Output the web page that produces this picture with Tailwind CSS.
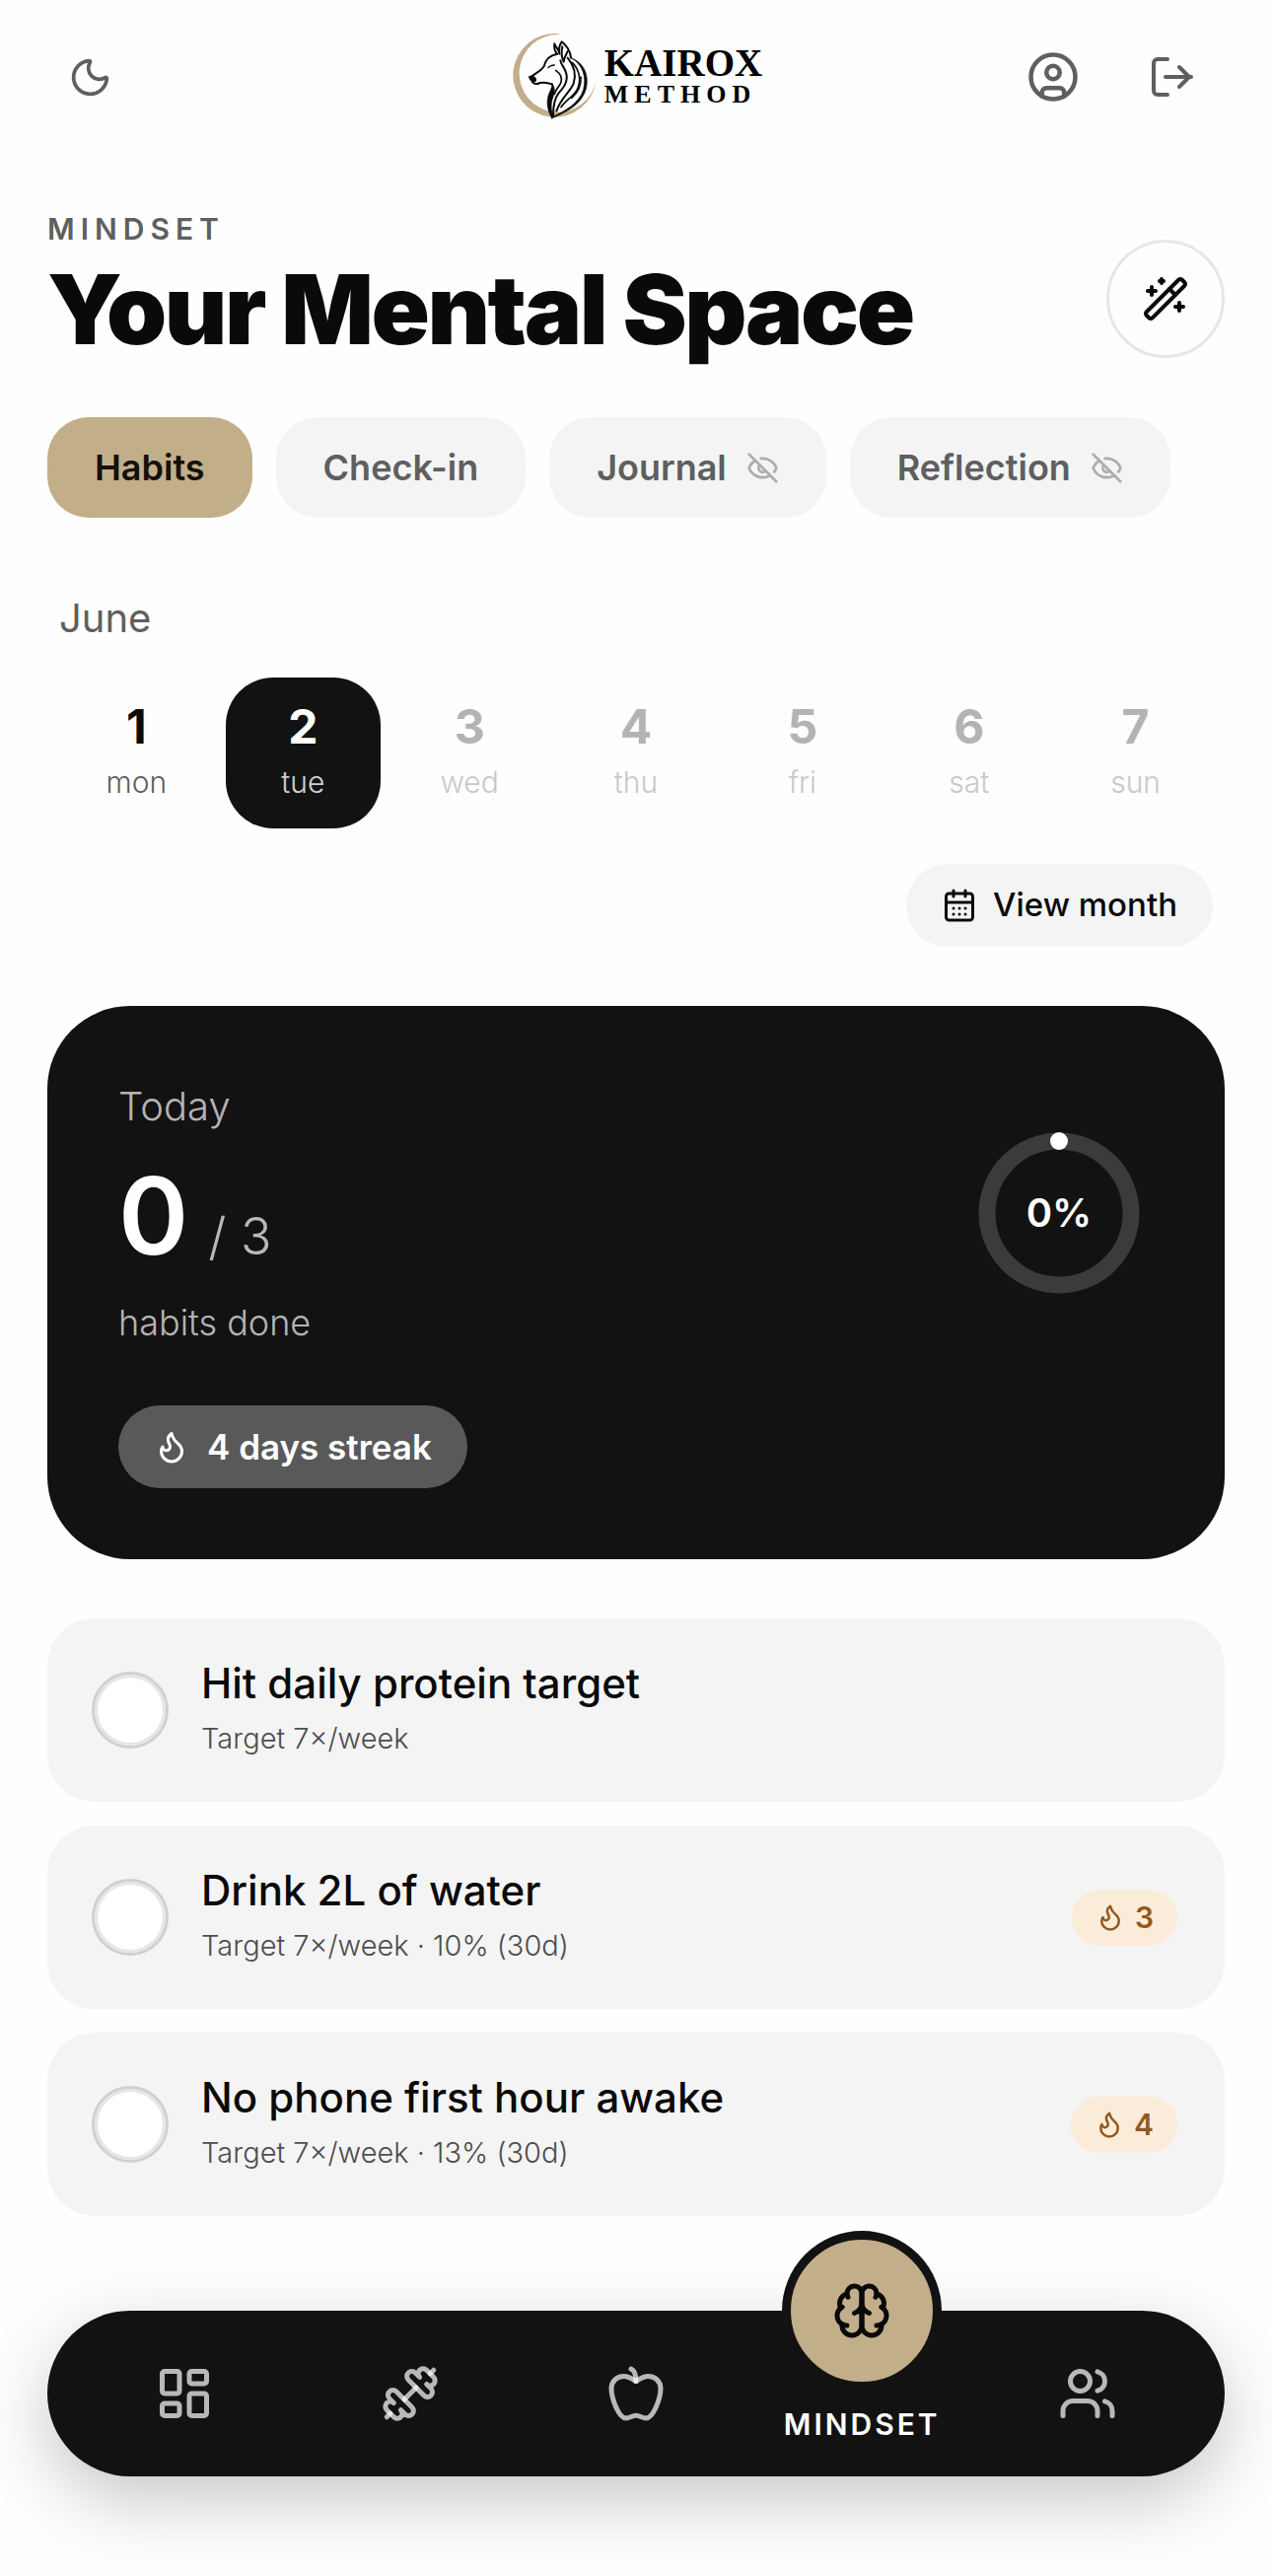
<!DOCTYPE html>
<html lang="en">
<head>
    <meta charset="UTF-8">
    <meta name="viewport" content="width=device-width, initial-scale=1.0">
    <title>Mindset - Kairox Method</title>
    <script src="https://cdn.jsdelivr.net/npm/@tailwindcss/browser@4"></script>
</head>
<body class="bg-[#fefefe] min-h-screen font-['Inter',sans-serif] text-[#0a0a0a]">
    <!-- Shared icons -->
    <svg class="hidden" aria-hidden="true">
        <symbol id="icon-flame" viewBox="0 0 24 24">
            <path d="M12 3q1 4 4 6.500t3 5.500a1 1 0 0 1-14 0 5 5 0 0 1 1-3 1 1 0 0 0 5 0c0-2-1.500-3-1.500-5q0-2 2.500-4"/>
        </symbol>
        <symbol id="icon-eye-off" viewBox="0 0 24 24">
            <path d="M10.733 5.076a10.744 10.744 0 0 1 11.205 6.575 1 1 0 0 1 0 .696 10.747 10.747 0 0 1-1.444 2.490"/>
            <path d="M14.084 14.158a3 3 0 0 1-4.242-4.242"/>
            <path d="M17.479 17.499a10.750 10.750 0 0 1-15.417-5.151 1 1 0 0 1 0-.696 10.750 10.750 0 0 1 4.446-5.143"/>
            <path d="m2 2 20 20"/>
        </symbol>
    </svg>

    <header class="grid grid-cols-[1fr_auto_1fr] items-center h-[156px] px-12 text-[#5f5f5f]">
        <button type="button" aria-label="Dark mode" class="flex items-center justify-center w-[87px] h-[108px]">
            <svg class="size-[45px]" viewBox="0 0 24 24" fill="none" stroke="currentColor" stroke-width="2" stroke-linecap="round" stroke-linejoin="round">
                <path d="M20.985 12.486a9 9 0 1 1-9.473-9.472c.405-.022.617.46.402.803a6 6 0 0 0 8.268 8.268c.344-.215.825-.004.803.401"/>
            </svg>
        </button>
        <a href="#" class="flex items-center gap-1.5 text-black">
            <svg class="size-[90px]" viewBox="50 35 270 270" fill="none" stroke="#0a0a0a" stroke-width="6" stroke-linecap="round" stroke-linejoin="round">
                <path d="M200 39A127 127 0 1 0 313 180A118 118 0 1 1 200 41Z" fill="#c3ae8a" stroke="none"/>
                <path d="M178 296C165 272 162 250 166 232C169 215 180 208 178 188C190 206 186 220 180 236C174 254 176 274 182 290C214 276 262 250 274 208C284 170 272 132 236 112C276 126 292 166 282 206C268 256 222 276 178 296Z" fill="#0a0a0a" stroke-width="2"/>
                <path d="M194 100C172 104 158 118 154 138C146 152 124 162 112 171"/>
                <path d="M110 170C122 168 130 174 128 181C122 186 114 184 110 170Z" fill="#0a0a0a"/>
                <path d="M118 184C122 194 134 192 142 188C154 186 168 188 178 192"/>
                <path d="M194 100C186 90 184 80 186 69C190 80 198 86 200 94"/>
                <path d="M201 100C198 84 202 72 208 63C222 74 234 90 236 112"/>
                <path d="M210 78C206 96 208 112 214 124C216 106 224 100 226 92"/>
                <path d="M167 142C172 136 179 134 186 134" stroke-width="4"/>
                <path d="M204 120C206 134 218 142 222 160C228 186 212 204 198 220C186 236 182 262 182 288"/>
                <path d="M226 112C244 134 254 160 244 190C234 216 206 232 192 274"/>
                <path d="M240 126C264 150 268 184 254 210C242 230 220 242 206 262" stroke-width="5"/>
                <path d="M190 150C204 160 210 172 206 186C202 200 190 204 186 222" stroke-width="5"/>
                <path d="M266 170C268 194 256 218 238 234" stroke-width="5"/>
            </svg>
            <span class="flex flex-col font-['Liberation_Serif',serif] font-bold">
                <span class="text-[39px] leading-9">KAIROX</span>
                <span class="text-[26px] leading-7 tracking-[6px]">METHOD</span>
            </span>
        </a>
        <div class="flex items-center justify-end gap-3">
            <button type="button" aria-label="Profile" class="flex items-center justify-center size-[108px]">
                <svg class="size-[54px]" viewBox="0 0 24 24" fill="none" stroke="currentColor" stroke-width="2" stroke-linecap="round" stroke-linejoin="round">
                    <circle cx="12" cy="12" r="10"/>
                    <circle cx="12" cy="10" r="3"/>
                    <path d="M7 20.662V19a2 2 0 0 1 2-2h6a2 2 0 0 1 2 2v1.662"/>
                </svg>
            </button>
            <button type="button" aria-label="Log out" class="flex items-center justify-center size-[108px]">
                <svg class="size-12" viewBox="0 0 24 24" fill="none" stroke="currentColor" stroke-width="2" stroke-linecap="round" stroke-linejoin="round">
                    <path d="M10 3H5a2 2 0 0 0-2 2v14a2 2 0 0 0 2 2h5"/>
                    <path d="M9 12h13"/>
                    <path d="m16 7 5 5-5 5"/>
                </svg>
            </button>
        </div>
    </header>

    <main class="px-12 pt-[58px]">
        <div class="flex items-end justify-between">
            <div>
                <p class="text-[30px] leading-9 font-semibold tracking-[6px] text-[#5f5f5f]">MINDSET</p>
                <h1 class="mt-[15px] text-[98px] leading-[98px] font-black tracking-tight">Your Mental Space</h1>
            </div>
            <button type="button" aria-label="Suggestions" class="flex shrink-0 items-center justify-center size-[120px] rounded-full border-3 border-[#e7e7e7]">
                <svg class="size-12" viewBox="0 0 24 24" fill="none" stroke="currentColor" stroke-width="2" stroke-linecap="round" stroke-linejoin="round">
                    <path d="m21.640 3.640-1.280-1.280a1.210 1.210 0 0 0-1.720 0L2.360 18.640a1.210 1.210 0 0 0 0 1.720l1.280 1.280a1.200 1.200 0 0 0 1.720 0L21.640 5.360a1.200 1.200 0 0 0 0-1.720"/>
                    <path d="m14 7 3 3"/>
                    <path d="M5 6v4"/>
                    <path d="M19 14v4"/>
                    <path d="M10 2v2"/>
                    <path d="M7 8H3"/>
                    <path d="M21 16h-4"/>
                    <path d="M11 3H9"/>
                </svg>
            </button>
        </div>

        <div class="mt-[60px] flex gap-6 text-4xl font-semibold text-[#5f5f5f]">
            <button type="button" class="h-[102px] px-12 rounded-[42px] bg-[#c3ae8a] text-[#14110a]">Habits</button>
            <button type="button" class="h-[102px] px-12 rounded-[42px] bg-[#f4f4f4]">Check-in</button>
            <button type="button" class="flex items-center gap-5 h-[102px] px-12 rounded-[42px] bg-[#f4f4f4]">
                Journal
                <svg class="size-[33px] text-[#adadad]" fill="none" stroke="currentColor" stroke-width="2" stroke-linecap="round" stroke-linejoin="round"><use href="#icon-eye-off"/></svg>
            </button>
            <button type="button" class="flex items-center gap-5 h-[102px] px-12 rounded-[42px] bg-[#f4f4f4]">
                Reflection
                <svg class="size-[33px] text-[#adadad]" fill="none" stroke="currentColor" stroke-width="2" stroke-linecap="round" stroke-linejoin="round"><use href="#icon-eye-off"/></svg>
            </button>
        </div>

        <section class="mt-[72px] px-3">
            <h2 class="text-[40px] leading-[60px] text-[#5f5f5f]">June</h2>
            <div id="week" class="mt-[30px] grid grid-cols-7 gap-3"></div>
            <div class="mt-9 flex justify-end">
                <button type="button" class="flex items-center gap-4 h-[84px] px-9 rounded-full bg-[#f4f4f4] text-[33px] font-medium">
                    <svg class="size-9" viewBox="0 0 24 24" fill="none" stroke="currentColor" stroke-width="2" stroke-linecap="round" stroke-linejoin="round">
                        <path d="M8 2v4"/>
                        <path d="M16 2v4"/>
                        <rect width="18" height="18" x="3" y="4" rx="2"/>
                        <path d="M3 10h18"/>
                        <path d="M8 14h.01M12 14h.01M16 14h.01M8 18h.01M12 18h.01M16 18h.01"/>
                    </svg>
                    View month
                </button>
            </div>
        </section>

        <section class="mt-[60px] p-[72px] rounded-[84px] bg-[#121212] text-white">
            <div class="flex items-center justify-between">
                <div>
                    <p class="text-[40px] leading-[60px] font-light text-white/70">Today</p>
                    <p class="mt-[27px] flex items-baseline gap-5">
                        <span class="text-[108px] leading-[108px] font-semibold">0</span>
                        <span class="text-[52px] leading-[54px] font-light text-white/70">/ 3</span>
                    </p>
                    <p class="mt-[27px] text-4xl leading-[54px] font-light text-white/70">habits done</p>
                </div>
                <div class="grid place-items-center">
                    <svg class="col-start-1 row-start-1 size-48" viewBox="0 0 192 192" fill="none">
                        <circle cx="96" cy="96" r="73" stroke="#3b3b3b" stroke-width="17"/>
                        <circle cx="96" cy="23" r="9" fill="#fff"/>
                    </svg>
                    <span class="col-start-1 row-start-1 text-[40px] font-semibold">0%</span>
                </div>
            </div>
            <div class="mt-[57px] flex items-center gap-[18px] w-fit h-[84px] px-9 rounded-full bg-[#595959] text-[35px] font-semibold">
                <svg class="size-9" fill="none" stroke="currentColor" stroke-width="2" stroke-linecap="round" stroke-linejoin="round"><use href="#icon-flame"/></svg>
                4 days streak
            </div>
        </section>

        <ul id="habitList" class="mt-[60px] space-y-6"></ul>
    </main>

    <nav class="mx-12 mt-24 mb-[101px] grid grid-cols-5 h-[168px] px-6 rounded-full bg-[#121212] text-white/70 shadow-[0_24px_72px_rgba(0,0,0,0.22)]">
        <a href="#" aria-label="Dashboard" class="flex items-center justify-center">
            <svg class="size-[60px]" viewBox="0 0 24 24" fill="none" stroke="currentColor" stroke-width="2" stroke-linecap="round" stroke-linejoin="round">
                <rect width="7" height="9" x="3" y="3" rx="1"/>
                <rect width="7" height="5" x="14" y="3" rx="1"/>
                <rect width="7" height="9" x="14" y="12" rx="1"/>
                <rect width="7" height="5" x="3" y="16" rx="1"/>
            </svg>
        </a>
        <a href="#" aria-label="Training" class="flex items-center justify-center">
            <svg class="size-[60px]" viewBox="0 0 24 24" fill="none" stroke="currentColor" stroke-width="2" stroke-linecap="round" stroke-linejoin="round">
                <path d="M17.596 12.768a2 2 0 1 0 2.829-2.829l-1.768-1.767a2 2 0 0 0 2.828-2.829l-2.828-2.828a2 2 0 0 0-2.829 2.828l-1.767-1.768a2 2 0 1 0-2.829 2.829z"/>
                <path d="m2.500 21.500 1.400-1.400"/>
                <path d="m20.100 3.900 1.400-1.400"/>
                <path d="M5.343 21.485a2 2 0 1 0 2.829-2.828l1.767 1.768a2 2 0 1 0 2.829-2.829l-6.364-6.364a2 2 0 1 0-2.829 2.829l1.768 1.767a2 2 0 0 0-2.828 2.829z"/>
                <path d="m9.600 14.400 4.800-4.800"/>
            </svg>
        </a>
        <a href="#" aria-label="Nutrition" class="flex items-center justify-center">
            <svg class="size-[60px]" viewBox="0 0 24 24" fill="none" stroke="currentColor" stroke-width="2" stroke-linecap="round" stroke-linejoin="round">
                <path d="M12 20.940c1.500 0 2.750 1.060 4 1.060 3 0 6-8 6-12.220A4.910 4.910 0 0 0 17 5c-2.220 0-4 1.440-5 2-1-.560-2.780-2-5-2a4.900 4.900 0 0 0-5 4.780C2 14 5 22 8 22c1.250 0 2.500-1.060 4-1.060Z"/>
                <path d="M10 2c1 .500 2 2 2 5"/>
            </svg>
        </a>
        <a href="#" class="flex flex-col items-center text-white">
            <span class="-mt-[81px] flex shrink-0 items-center justify-center size-[162px] rounded-full border-[9px] border-[#121212] bg-[#c3ae8a] text-[#0a0a0a]">
                <svg class="size-[60px]" viewBox="0 0 24 24" fill="none" stroke="currentColor" stroke-width="2" stroke-linecap="round" stroke-linejoin="round">
                    <path d="M12 5a3 3 0 1 0-5.997.125 4 4 0 0 0-2.526 5.770 4 4 0 0 0 .556 6.588A4 4 0 1 0 12 18Z"/>
                    <path d="M12 5a3 3 0 1 1 5.997.125 4 4 0 0 1 2.526 5.770 4 4 0 0 1-.556 6.588A4 4 0 1 1 12 18Z"/>
                    <path d="M15 13a4.500 4.500 0 0 1-3-4 4.500 4.500 0 0 1-3 4"/>
                    <path d="M17.599 6.500a3 3 0 0 0 .399-1.375"/>
                    <path d="M6.003 5.125A3 3 0 0 0 6.401 6.500"/>
                    <path d="M3.477 10.896a4 4 0 0 1 .585-.396"/>
                    <path d="M19.938 10.500a4 4 0 0 1 .585.396"/>
                    <path d="M6 18a4 4 0 0 1-1.967-.516"/>
                    <path d="M19.967 17.484A4 4 0 0 1 18 18"/>
                </svg>
            </span>
            <span class="mt-4 text-[30px] leading-9 font-semibold tracking-[3px]">MINDSET</span>
        </a>
        <a href="#" aria-label="Community" class="flex items-center justify-center">
            <svg class="size-[60px]" viewBox="0 0 24 24" fill="none" stroke="currentColor" stroke-width="2" stroke-linecap="round" stroke-linejoin="round">
                <path d="M16 21v-2a4 4 0 0 0-4-4H6a4 4 0 0 0-4 4v2"/>
                <circle cx="9" cy="7" r="4"/>
                <path d="M22 21v-2a4 4 0 0 0-3-3.870"/>
                <path d="M16 3.130a4 4 0 0 1 0 7.750"/>
            </svg>
        </a>
    </nav>

    <script>
        const days = ['mon', 'tue', 'wed', 'thu', 'fri', 'sat', 'sun'];
        const today = 2;

        const habits = [
            { name: 'Hit daily protein target', detail: 'Target 7×/week', streak: 0 },
            { name: 'Drink 2L of water', detail: 'Target 7×/week · 10% (30d)', streak: 3 },
            { name: 'No phone first hour awake', detail: 'Target 7×/week · 13% (30d)', streak: 4 }
        ];

        function renderWeek() {
            const week = document.getElementById('week');
            days.forEach((day, index) => {
                const date = index + 1;
                let boxColor = 'text-[#0a0a0a]';
                let dayColor = 'text-[#5f5f5f]';
                if (date === today) {
                    boxColor = 'bg-[#121212] text-white';
                    dayColor = 'text-white/80';
                } else if (date > today) {
                    boxColor = 'text-[#b3b3b3]';
                    dayColor = 'text-[#c8c8c8]';
                }
                const button = document.createElement('button');
                button.type = 'button';
                button.disabled = date > today;
                button.className = `flex flex-col items-center gap-[5px] pt-5 pb-[26px] rounded-[48px] ${boxColor}`;
                button.innerHTML = `
                    <span class="text-5xl leading-[60px] font-bold">${date}</span>
                    <span class="text-[30px] leading-[42px] font-light ${dayColor}">${day}</span>
                `;
                week.appendChild(button);
            });
        }

        function renderHabits() {
            const habitList = document.getElementById('habitList');
            habits.forEach((habit, index) => {
                const item = document.createElement('li');
                item.className = 'flex items-center h-[186px] pl-[45px] pr-12 rounded-[48px] bg-[#f4f4f4]';
                item.innerHTML = `
                    <input type="checkbox" id="habit${index}" class="appearance-none shrink-0 size-[78px] rounded-full bg-white border-3 border-[#d0d0d0] inset-ring-3 inset-ring-[#e6e6e6] checked:bg-[#c3ae8a]">
                    <label for="habit${index}" class="ml-[33px] grow flex flex-col gap-1">
                        <span class="text-[42px] leading-[54px] font-medium">${habit.name}</span>
                        <span class="text-[29px] leading-[50px] font-light text-[#4d4d4d]">${habit.detail}</span>
                    </label>
                    ${habit.streak ? `
                        <span class="flex items-center gap-2.5 h-[57px] px-6 rounded-full bg-[#fbecd9] text-[30px] font-semibold text-[#92591f]">
                            <svg class="size-[30px]" fill="none" stroke="currentColor" stroke-width="2" stroke-linecap="round" stroke-linejoin="round"><use href="#icon-flame"/></svg>
                            ${habit.streak}
                        </span>
                    ` : ''}
                `;
                habitList.appendChild(item);
            });
        }

        renderWeek();
        renderHabits();
    </script>
</body>
</html>
